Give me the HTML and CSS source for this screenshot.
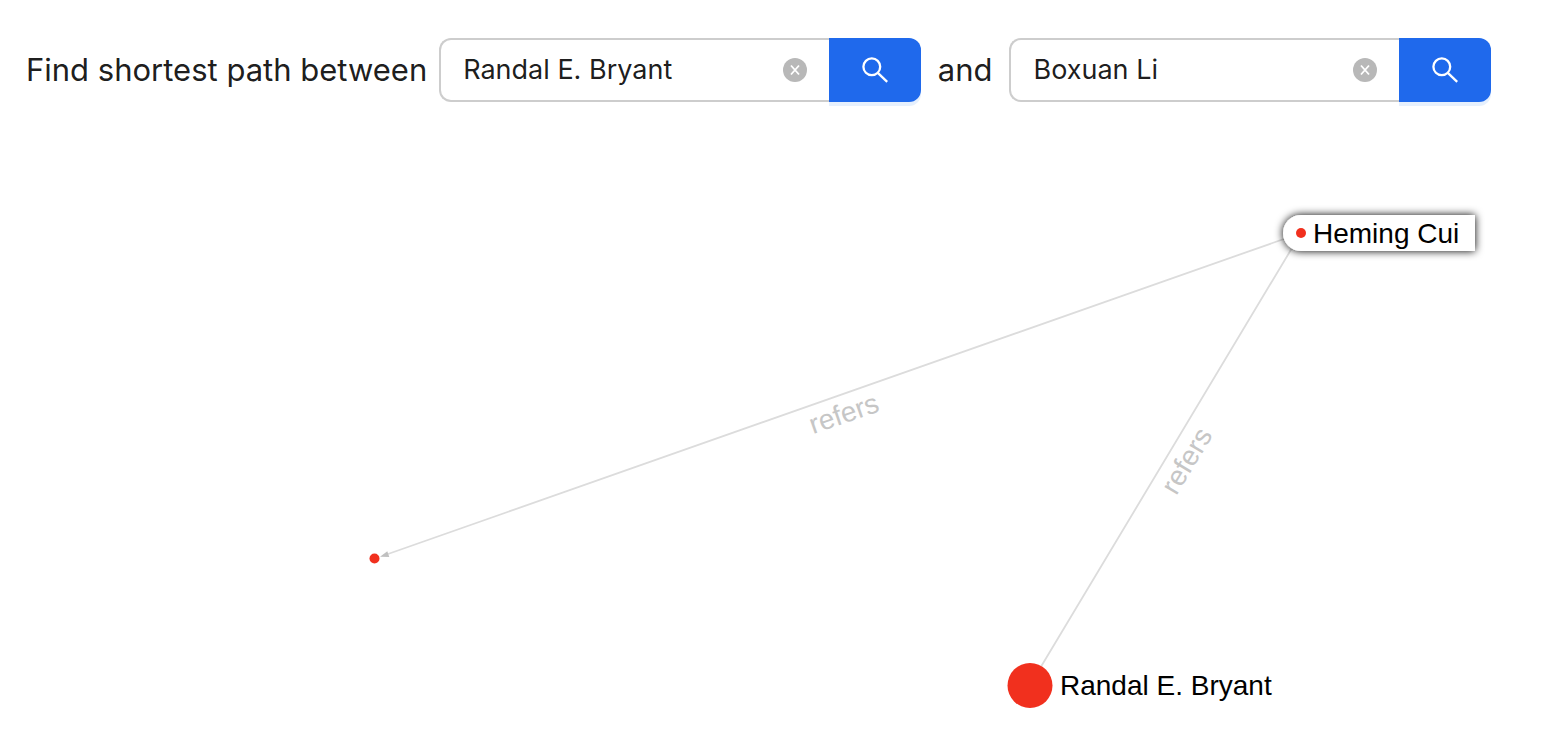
FILE: index.html
```html
<!DOCTYPE html>
<html lang="en">
<head>
<meta charset="utf-8">
<meta name="viewport" content="width=device-width, initial-scale=1">
<title>Shortest path</title>
<link rel="stylesheet" href="styles.css">
</head>
<body>
<form class="path-form">
  <label class="path-label" for="from">Find shortest path between</label>
  <div class="search">
    <div class="field">
      <input class="field-input" id="from" type="text" value="Randal E. Bryant">
      <button class="clear" type="button" aria-label="Clear first author">
        <svg viewBox="0 0 24 24" aria-hidden="true"><circle cx="12" cy="12" r="12" fill="#b8b8b8"/><path d="M8 7.500l8 9M16 7.500l-8 9" stroke="#fff" stroke-width="1.8"/></svg>
      </button>
    </div>
    <button class="search-button" type="button" aria-label="Search first author">
      <svg viewBox="0 0 28 28" aria-hidden="true"><circle cx="10.800" cy="10.800" r="8.400"/><path d="M16.800 16.800l9.400 9"/></svg>
    </button>
  </div>
  <label class="path-label path-label-joining" for="to">and</label>
  <div class="search">
    <div class="field">
      <input class="field-input" id="to" type="text" value="Boxuan Li">
      <button class="clear" type="button" aria-label="Clear second author">
        <svg viewBox="0 0 24 24" aria-hidden="true"><circle cx="12" cy="12" r="12" fill="#b8b8b8"/><path d="M8 7.500l8 9M16 7.500l-8 9" stroke="#fff" stroke-width="1.8"/></svg>
      </button>
    </div>
    <button class="search-button" type="button" aria-label="Search second author">
      <svg viewBox="0 0 28 28" aria-hidden="true"><circle cx="10.800" cy="10.800" r="8.400"/><path d="M16.800 16.800l9.400 9"/></svg>
    </button>
  </div>
</form>
<main class="graph">
  <svg class="graph-canvas" viewBox="0 102 1568 640" role="img" aria-label="Reference graph">
    <defs>
      <filter id="shadow" x="-10%" y="-50%" width="120%" height="200%">
        <feDropShadow dx="0" dy="0" stdDeviation="4" flood-color="#000" flood-opacity="1"/>
      </filter>
    </defs>
    <path class="edge" d="M1301 233L388 554M1301 233L1030 685"/>
    <path class="arrow" d="M380 556.800L387.300 551.200L389.300 557Z"/>
    <text class="edge-label" transform="translate(844 414) rotate(-19)" y="9">refers</text>
    <text class="edge-label" transform="translate(1187 461) rotate(-59)" y="9">refers</text>
    <path class="hover-card" filter="url(#shadow)" d="M1301 215H1475V251H1301A18 18 0 0 1 1301 215Z"/>
    <circle class="node" cx="1301" cy="233" r="5"/>
    <circle class="node" cx="374.500" cy="558.500" r="5"/>
    <circle class="node" cx="1030" cy="685.500" r="22.500"/>
    <text class="node-label" x="1313" y="243">Heming Cui</text>
    <text class="node-label" x="1060" y="695">Randal E. Bryant</text>
  </svg>
</main>
</body>
</html>
```
FILE: styles.css
```css
* {
  box-sizing: border-box;
}

body {
  margin: 0;
  background: #fff;
  font-family: Inter, "Liberation Sans", sans-serif;
  color: rgba(0, 0, 0, 0.9);
}

.path-form {
  display: flex;
  align-items: center;
  padding: 38px 77px 0 26px;
}

.path-label {
  flex: none;
  margin-right: 12px;
  font-size: 31px;
  line-height: 64px;
}

.path-label-joining {
  margin: 0 17px;
}

.search {
  display: flex;
  flex: 1;
  min-width: 0;
  height: 64px;
}

.field {
  display: flex;
  flex: 1;
  align-items: center;
  min-width: 0;
  padding: 0 22px;
  border: 2px solid #cdcdcd;
  border-right: 0;
  border-radius: 12px 0 0 12px;
}

.field-input {
  flex: 1;
  min-width: 0;
  padding: 0;
  border: 0;
  outline: 0;
  background: transparent;
  color: inherit;
  font: inherit;
  font-size: 27px;
  line-height: 44px;
}

.clear {
  flex: none;
  width: 24px;
  height: 24px;
  padding: 0;
  border: 0;
  background: none;
}

.clear svg {
  display: block;
  width: 24px;
  height: 24px;
}

.search-button {
  display: flex;
  flex: none;
  align-items: center;
  justify-content: center;
  width: 92px;
  padding: 0;
  border: 0;
  border-radius: 0 12px 12px 0;
  background: #1f69ec;
  box-shadow: 0 4px 0 #e6f0fd;
}

.search-button svg {
  width: 28px;
  height: 28px;
  fill: none;
  stroke: #fff;
  stroke-width: 2.3;
}

.graph-canvas {
  display: block;
  width: 100%;
  font-family: "Liberation Sans", Arial, sans-serif;
  font-size: 28px;
}

.edge {
  fill: none;
  stroke: #dcdcdc;
  stroke-width: 1.8;
}

.arrow {
  fill: #c0c0c0;
}

.edge-label {
  fill: #c6c6c6;
  text-anchor: middle;
}

.hover-card {
  fill: #fff;
}

.node {
  fill: #f1301e;
}

.node-label {
  fill: #000;
}
```
